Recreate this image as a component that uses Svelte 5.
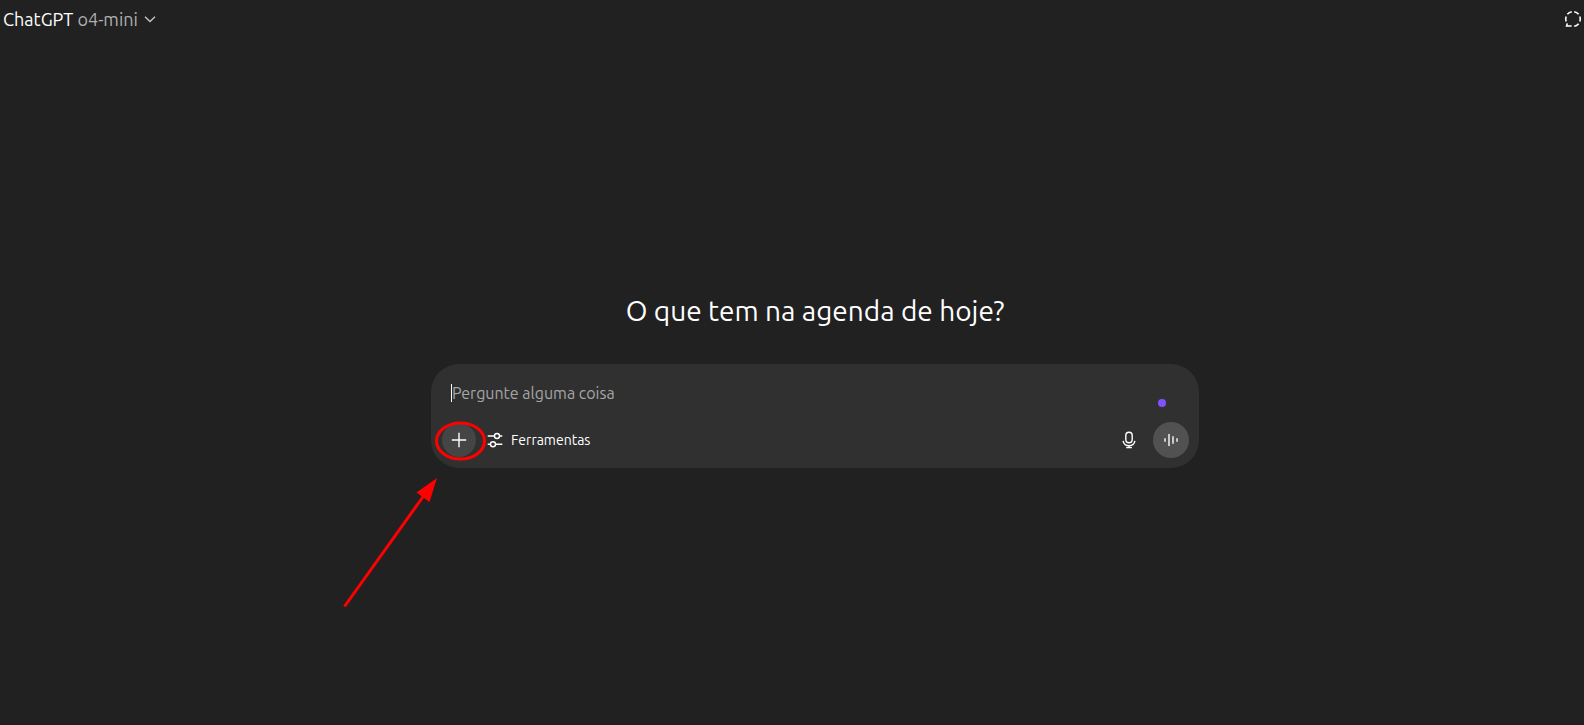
<script lang="ts">
  let prompt = $state('');
</script>

<div class="page">
  <header>
    <button class="model" type="button" aria-haspopup="menu">
      <span>ChatGPT <span class="version">o4-mini</span></span>
      <svg width="16" height="16" viewBox="0 0 16 16" aria-hidden="true">
        <path d="M3 5.8 8 10.6l5-4.8" />
      </svg>
    </button>
    <button class="temporary" type="button" aria-label="Ativar chat temporário">
      <svg width="20" height="20" viewBox="0 0 20 20" aria-hidden="true">
        <path d="M16.84 7.44a7.3 7.3 0 0 1 0 5.12M15.63 14.64a7.3 7.3 0 0 1-4.43 2.56M3.16 12.56a7.3 7.3 0 0 1 0-5.12M4.37 5.36A7.3 7.3 0 0 1 8.8 2.8M11.2 2.8a7.3 7.3 0 0 1 4.43 2.56M4.3 14.4 3.6 16.9l5 .1" />
      </svg>
    </button>
  </header>

  <main>
    <h1>O que tem na agenda de hoje?</h1>

    <form class="composer" onsubmit={(event) => event.preventDefault()}>
      <div class="field">
        <span class="caret"></span>
        <input type="text" bind:value={prompt} placeholder="Pergunte alguma coisa" aria-label="Pergunte alguma coisa" />
      </div>

      <div class="actions">
        <button class="round add" type="button" aria-label="Adicionar fotos e arquivos">
          <svg width="20" height="20" viewBox="0 0 20 20" aria-hidden="true">
            <path d="M10 2.8v14.4M2.8 10h14.4" />
          </svg>
        </button>
        <button class="tools" type="button">
          <svg width="20" height="20" viewBox="0 0 20 20" aria-hidden="true">
            <path d="M2.7 6h6.6M14.7 6h2.6M2.7 14.3h2.6M10.7 14.3h6.6" />
            <circle cx="12" cy="6" r="2.5" />
            <circle cx="8" cy="14.3" r="2.5" />
          </svg>
          Ferramentas
        </button>
        <button class="round mic" type="button" aria-label="Ditar">
          <svg width="20" height="20" viewBox="0 0 20 20" aria-hidden="true">
            <rect x="6.8" y="2.3" width="6.4" height="10.4" rx="3.2" />
            <path d="M4.1 10.8a6 6 0 0 0 11.8 0M10 15.3v2.2M7.2 17.6h5.6" />
          </svg>
        </button>
        <button class="round voice" type="button" aria-label="Usar modo de voz">
          <svg width="20" height="20" viewBox="0 0 20 20" aria-hidden="true">
            <path d="M4 8.2v3.6M8 4v12M12 6.3v7.4M16 8.2v3.6" />
          </svg>
        </button>
      </div>

      <span class="dot"></span>

      <svg class="marker" width="160" height="200" viewBox="0 0 160 200" aria-hidden="true">
        <ellipse cx="129.5" cy="27" rx="24" ry="18" />
        <path d="M13.5 192.5 94 80" />
        <polygon points="106,64 85.5,78.5 98.5,88" />
      </svg>
    </form>
  </main>
</div>

<style>
  :global(body) {
    background: #212121;
  }

  .page {
    box-sizing: border-box;
    min-height: 100vh;
    display: flex;
    flex-direction: column;
    border-bottom: 2px solid #241b20;
    color: #fff;
    font-family: Ubuntu, "Noto Sans", sans-serif;
  }

  button {
    display: flex;
    align-items: center;
    border: none;
    padding: 0;
    background: transparent;
    color: inherit;
    font: inherit;
    cursor: pointer;
  }

  svg {
    flex: none;
    fill: none;
    stroke: currentColor;
    stroke-width: 1.4;
  }

  header {
    display: flex;
    justify-content: space-between;
    align-items: center;
    height: 38px;
    padding: 0 1px 0 3px;
  }

  .model {
    gap: 4px;
    font-size: 18px;
    line-height: 28px;
  }

  .version {
    color: #afafaf;
  }

  .model svg {
    color: #c4c4c4;
  }

  .temporary svg {
    stroke-width: 1.6;
  }

  main {
    flex: 1;
    display: flex;
    flex-direction: column;
    align-items: center;
    justify-content: center;
    gap: 35px;
    padding: 0 0 1px 46px;
  }

  h1 {
    margin: 0;
    font-size: 28px;
    line-height: 36px;
    font-weight: 400;
  }

  .composer {
    position: relative;
    box-sizing: border-box;
    width: 100%;
    max-width: 768px;
    padding: 10px;
    border-radius: 28px;
    background: #303030;
  }

  .field {
    display: flex;
    align-items: center;
    height: 38px;
    padding: 0 10px;
    margin-bottom: 10px;
  }

  .caret {
    width: 1px;
    height: 18px;
    background: #fff;
  }

  input {
    flex: 1;
    min-width: 0;
    padding: 0;
    border: none;
    outline: none;
    background: transparent;
    color: #fff;
    font: inherit;
    font-size: 16px;
    line-height: 24px;
  }

  input::placeholder {
    color: #a5a5a5;
    opacity: 1;
  }

  .actions {
    display: flex;
    align-items: center;
  }

  .round {
    justify-content: center;
    width: 36px;
    height: 36px;
    border-radius: 50%;
  }

  .add {
    width: 34px;
    height: 34px;
    margin: 1px;
    background: #454545;
  }

  .tools {
    gap: 6px;
    height: 36px;
    padding: 0 8px;
    font-size: 14px;
  }

  .mic {
    margin-left: auto;
    margin-right: 6px;
  }

  .voice {
    background: #515151;
    color: #c8c8c8;
  }

  .voice svg {
    stroke-width: 2;
  }

  .dot {
    position: absolute;
    top: 35px;
    right: 33px;
    width: 8px;
    height: 8px;
    border-radius: 50%;
    background: #8250ff;
  }

  .marker {
    position: absolute;
    top: 50px;
    left: -100px;
    stroke: #f00;
    stroke-width: 3;
    pointer-events: none;
  }

  .marker polygon {
    fill: #f00;
    stroke: none;
  }
</style>
